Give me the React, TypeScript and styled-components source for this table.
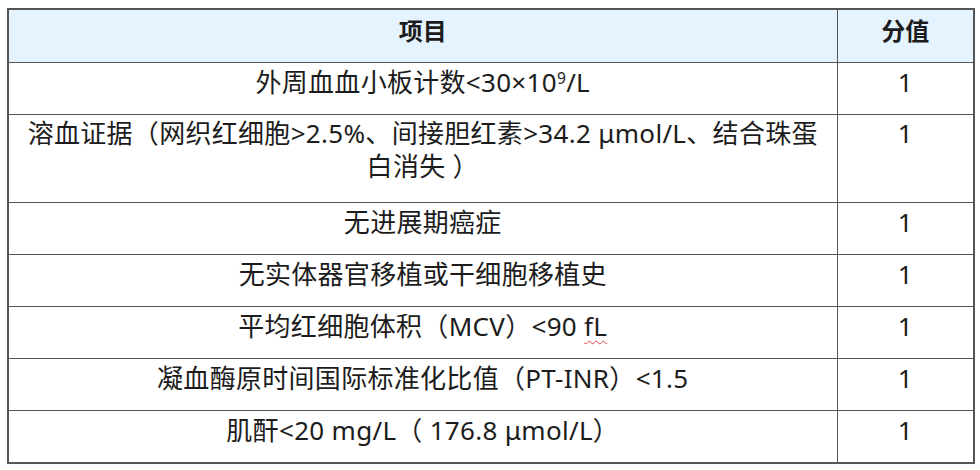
import React from 'react';
import styled, { createGlobalStyle } from 'styled-components';

const GlobalStyle = createGlobalStyle`
    html, body {
        margin: 0;
        padding: 0;
        background: #ffffff;
    }
    body {
        font-family: "Noto Sans", "Noto Sans CJK SC", sans-serif;
        color: #1c1c1c;
    }
`;

const Page = styled.div`
    padding: 8px 5px 0 7px;
`;

const Table = styled.table`
    width: 968px;
    border-collapse: collapse;
    border: 2px solid #555;
    table-layout: fixed;
`;

const HeadCell = styled.th<{ $w?: number }>`
    width: ${p => (p.$w ? `${p.$w}px` : 'auto')};
    height: 53px;
    box-sizing: border-box;
    padding: 2px 10px 15px;
    background: #e4f3fd;
    border: 1px solid #555;
    font-size: 24px;
    font-weight: 700;
    line-height: 35px;
    text-align: center;
    vertical-align: top;
    font-family: "Noto Sans CJK SC", "Noto Sans", sans-serif;
`;

const Cell = styled.td<{ $tall?: boolean }>`
    height: ${p => (p.$tall ? 88 : 51)}px;
    box-sizing: border-box;
    padding: 2px 6px 14px;
    border: 1px solid #555;
    font-size: 26px;
    letter-spacing: 0.3px;
    line-height: ${p => (p.$tall ? 33 : 35)}px;
    text-align: center;
    vertical-align: top;
    white-space: nowrap;
`;

const Sup = styled.sup`
    font-size: 0.6em;
    vertical-align: top;
    position: relative;
    top: -4px;
`;

const Typo = styled.span`
    text-decoration: underline wavy #e0463c;
    text-decoration-thickness: 1px;
    text-underline-offset: 4px;
`;

const rows: { item: React.ReactNode; score: string; tall?: boolean }[] = [
    { item: <>外周血血小板计数&lt;30×10<Sup>9</Sup>/L</>, score: '1' },
    { item: <>溶血证据（网织红细胞&gt;2.5%、间接胆红素&gt;34.2 μmol/L、结合珠蛋<br />白消失 ）</>, score: '1', tall: true },
    { item: '无进展期癌症', score: '1' },
    { item: '无实体器官移植或干细胞移植史', score: '1' },
    { item: <>平均红细胞体积（MCV）&lt;90 <Typo>fL</Typo></>, score: '1' },
    { item: '凝血酶原时间国际标准化比值（PT-INR）<1.5', score: '1' },
    { item: '肌酐<20 mg/L（ 176.8 μmol/L）', score: '1' },
];

const App = () => {
    return (
        <>
            <GlobalStyle />
            <Page>
                <Table>
                    <thead>
                        <tr>
                            <HeadCell>项目</HeadCell>
                            <HeadCell $w={137}>分值</HeadCell>
                        </tr>
                    </thead>
                    <tbody>
                        {rows.map((r, i) => (
                            <tr key={i}>
                                <Cell $tall={r.tall}>{r.item}</Cell>
                                <Cell $tall={r.tall}>{r.score}</Cell>
                            </tr>
                        ))}
                    </tbody>
                </Table>
            </Page>
        </>
    );
};

export default App;
